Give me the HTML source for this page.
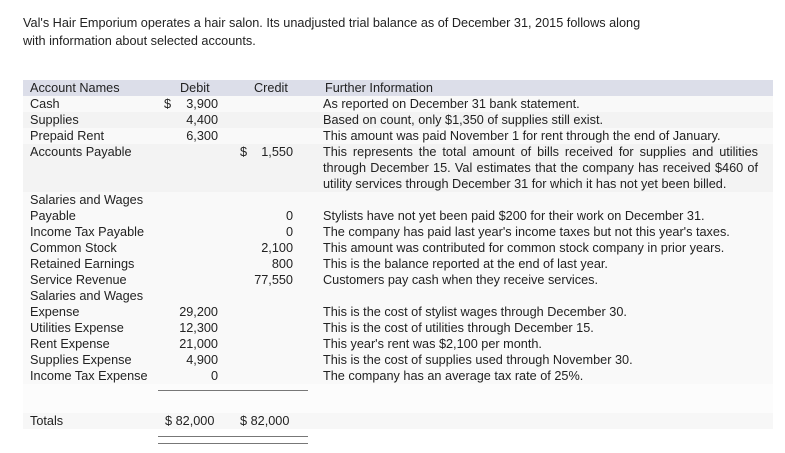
<!DOCTYPE html>
<html><head><meta charset="utf-8"><style>
body{margin:0;width:785px;height:453px;background:#fff;font-family:"Liberation Sans",sans-serif;font-size:12.7px;color:#222;position:relative;overflow:hidden}
.a{position:absolute;white-space:nowrap;line-height:16px}
.hl{position:absolute;height:1px;background:#777}
</style></head><body>
<div class="a" style="left:23px;top:14px;line-height:18px;white-space:normal;width:700px">Val's Hair Emporium operates a hair salon. Its unadjusted trial balance as of December 31, 2015 follows along<br>with information about selected accounts.</div>
<div class="a" style="left:23px;top:80px;width:750px;height:304px;background:#f9f9f9"></div>
<div class="a" style="left:23px;top:384px;width:750px;height:45px;background:#fcfcfc"></div>
<div class="a" style="left:23px;top:413px;width:750px;height:16px;background:#f7f7f7"></div>
<div class="a" style="left:23px;top:80px;width:750px;height:16px;background:#dcdee9"></div>
<div class="a" style="left:23px;top:112px;width:750px;height:16px;background:#f3f3f3"></div>
<div class="a" style="left:23px;top:144px;width:750px;height:48px;background:#f3f3f3"></div>
<div class="a" style="left:30px;top:80px">Account Names</div>
<div class="a" style="left:180px;top:80px">Debit</div>
<div class="a" style="left:254px;top:80px">Credit</div>
<div class="a" style="left:325px;top:80px">Further Information</div>
<div class="a" style="left:30px;top:96px;line-height:16px">Cash<br>Supplies<br>Prepaid Rent<br>Accounts Payable<br><br><br>Salaries and Wages<br>Payable<br>Income Tax Payable<br>Common Stock<br>Retained Earnings<br>Service Revenue<br>Salaries and Wages<br>Expense<br>Utilities Expense<br>Rent Expense<br>Supplies Expense<br>Income Tax Expense</div>
<div class="a" style="left:164px;top:96px">$</div>
<div class="a" style="right:567px;top:96px;text-align:right">3,900<br>4,400<br>6,300</div>
<div class="a" style="left:240px;top:144px">$</div>
<div class="a" style="right:492px;top:144px">1,550</div>
<div class="a" style="right:492px;top:208px;text-align:right">0<br>0<br>2,100<br>800<br>77,550</div>
<div class="a" style="right:567px;top:304px;text-align:right">29,200<br>12,300<br>21,000<br>4,900<br>0</div>
<div class="a" style="left:323px;top:96px">As reported on December 31 bank statement.<br>Based on count, only $1,350 of supplies still exist.<br>This amount was paid November 1 for rent through the end of January.</div>
<div class="a" style="left:323px;top:144px;width:435px;white-space:normal;text-align:justify;text-align-last:left">This represents the total amount of bills received for supplies and utilities through December 15. Val estimates that the company has received $460 of utility services through December 31 for which it has not yet been billed.</div>
<div class="a" style="left:323px;top:208px">Stylists have not yet been paid $200 for their work on December 31.<br>The company has paid last year's income taxes but not this year's taxes.<br>This amount was contributed for common stock company in prior years.<br>This is the balance reported at the end of last year.<br>Customers pay cash when they receive services.</div>
<div class="a" style="left:323px;top:304px">This is the cost of stylist wages through December 30.<br>This is the cost of utilities through December 15.<br>This year's rent was $2,100 per month.<br>This is the cost of supplies used through November 30.<br>The company has an average tax rate of 25%.</div>
<div class="hl" style="left:158px;top:390px;width:150px"></div>
<div class="a" style="left:30px;top:413px">Totals</div>
<div class="a" style="left:165px;top:413px">$ 82,000</div>
<div class="a" style="left:240px;top:413px">$ 82,000</div>
<div class="hl" style="left:158px;top:436px;width:150px"></div>
<div class="hl" style="left:158px;top:443px;width:150px"></div>
</body></html>
